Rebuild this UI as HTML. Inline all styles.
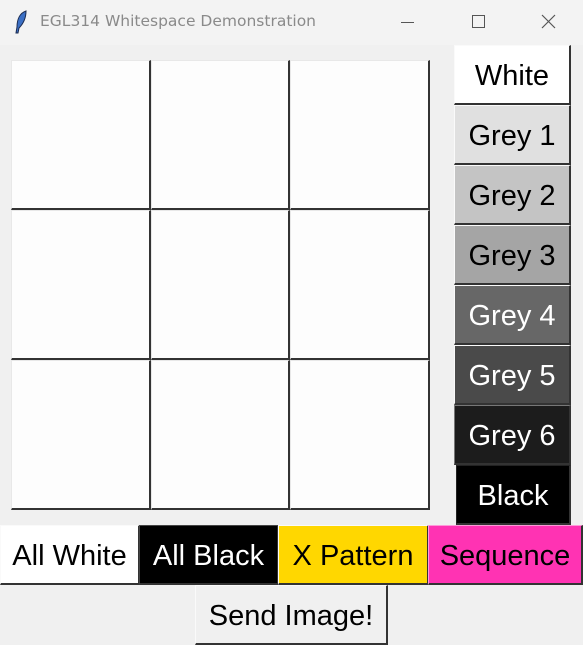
<!DOCTYPE html>
<html><head><style>
*{margin:0;padding:0;box-sizing:border-box}
body{width:583px;height:642px;background:#f0f0f0;position:relative;overflow:hidden;font-family:"Liberation Sans",Arial,sans-serif}
.tb{position:absolute;left:0;top:0;width:583px;height:45px;background:#f3f3f3}
.tt{position:absolute;left:40px;top:12px;color:#8a8a8a;font-family:"DejaVu Sans","Liberation Sans",sans-serif;font-size:15.5px}
.b{position:absolute;display:flex;align-items:center;justify-content:center;font-size:29px;padding-top:3px;border-style:solid;border-width:1px 2px 2px 1px;border-color:#fafafa #333 #333 #fafafa}
.c{position:absolute;background:#fdfdfd;border-style:solid;border-width:1px 2px 2px 1px;border-color:#e8e8e8 #333 #333 #e8e8e8}
</style></head><body>
<div class="tb">
<svg style="position:absolute;left:14px;top:10px" width="14" height="24" viewBox="0 0 14 24"><path d="M12 1 C6 3 3 9 3 17 L2 23 L4 23 L5 18 C9 14 12 8 12 1Z" fill="#3b6fc4" stroke="#1b2b50" stroke-width="1"/></svg>
<div class="tt">EGL314 Whitespace Demonstration</div>
<div style="position:absolute;left:401px;top:22px;width:13px;height:1px;background:#555"></div>
<div style="position:absolute;left:472px;top:15px;width:13px;height:13px;border:1px solid #555"></div>
<svg style="position:absolute;left:541px;top:14px" width="15" height="15"><path d="M1 1L14 14M14 1L1 14" stroke="#555" stroke-width="1.2"/></svg>
</div>
<div class="c" style="left:11px;top:60px;width:140px;height:150px"></div>
<div class="c" style="left:151px;top:60px;width:139px;height:150px"></div>
<div class="c" style="left:290px;top:60px;width:140px;height:150px"></div>
<div class="c" style="left:11px;top:210px;width:140px;height:150px"></div>
<div class="c" style="left:151px;top:210px;width:139px;height:150px"></div>
<div class="c" style="left:290px;top:210px;width:140px;height:150px"></div>
<div class="c" style="left:11px;top:360px;width:140px;height:150px"></div>
<div class="c" style="left:151px;top:360px;width:139px;height:150px"></div>
<div class="c" style="left:290px;top:360px;width:140px;height:150px"></div>

<div class="b" style="left:454px;top:45px;width:117px;height:60px;background:#fff;color:#000">White</div>
<div class="b" style="left:454px;top:105px;width:117px;height:60px;background:#e0e0e0;color:#000">Grey 1</div>
<div class="b" style="left:454px;top:165px;width:117px;height:60px;background:#c4c4c4;color:#000">Grey 2</div>
<div class="b" style="left:454px;top:225px;width:117px;height:60px;background:#a5a5a5;color:#000">Grey 3</div>
<div class="b" style="left:454px;top:285px;width:117px;height:60px;background:#676767;color:#fff">Grey 4</div>
<div class="b" style="left:454px;top:345px;width:117px;height:60px;background:#4a4a4a;color:#fff">Grey 5</div>
<div class="b" style="left:454px;top:405px;width:117px;height:60px;background:#1c1c1c;color:#fff;border-color:#777 #333 #333 #777">Grey 6</div>
<div class="b" style="left:456px;top:465px;width:115px;height:60px;background:#000;color:#fff;border-color:#222 #333 #333 #222">Black</div>

<div class="b" style="left:0;top:525px;width:140px;height:60px;background:#fff;color:#000">All White</div>
<div class="b" style="left:139px;top:525px;width:140px;height:60px;background:#000;color:#fff;border-color:#444 #333 #333 #444">All Black</div>
<div class="b" style="left:278px;top:525px;width:151px;height:60px;background:#ffd700;color:#000">X Pattern</div>
<div class="b" style="left:428px;top:525px;width:155px;height:60px;background:#ff33b3;color:#000;border-color:#ff99d9 #333 #333 #ff99d9">Sequence</div>
<div class="b" style="left:195px;top:585px;width:193px;height:60px;background:#f0f0f0;color:#000">Send Image!</div>
</body></html>
